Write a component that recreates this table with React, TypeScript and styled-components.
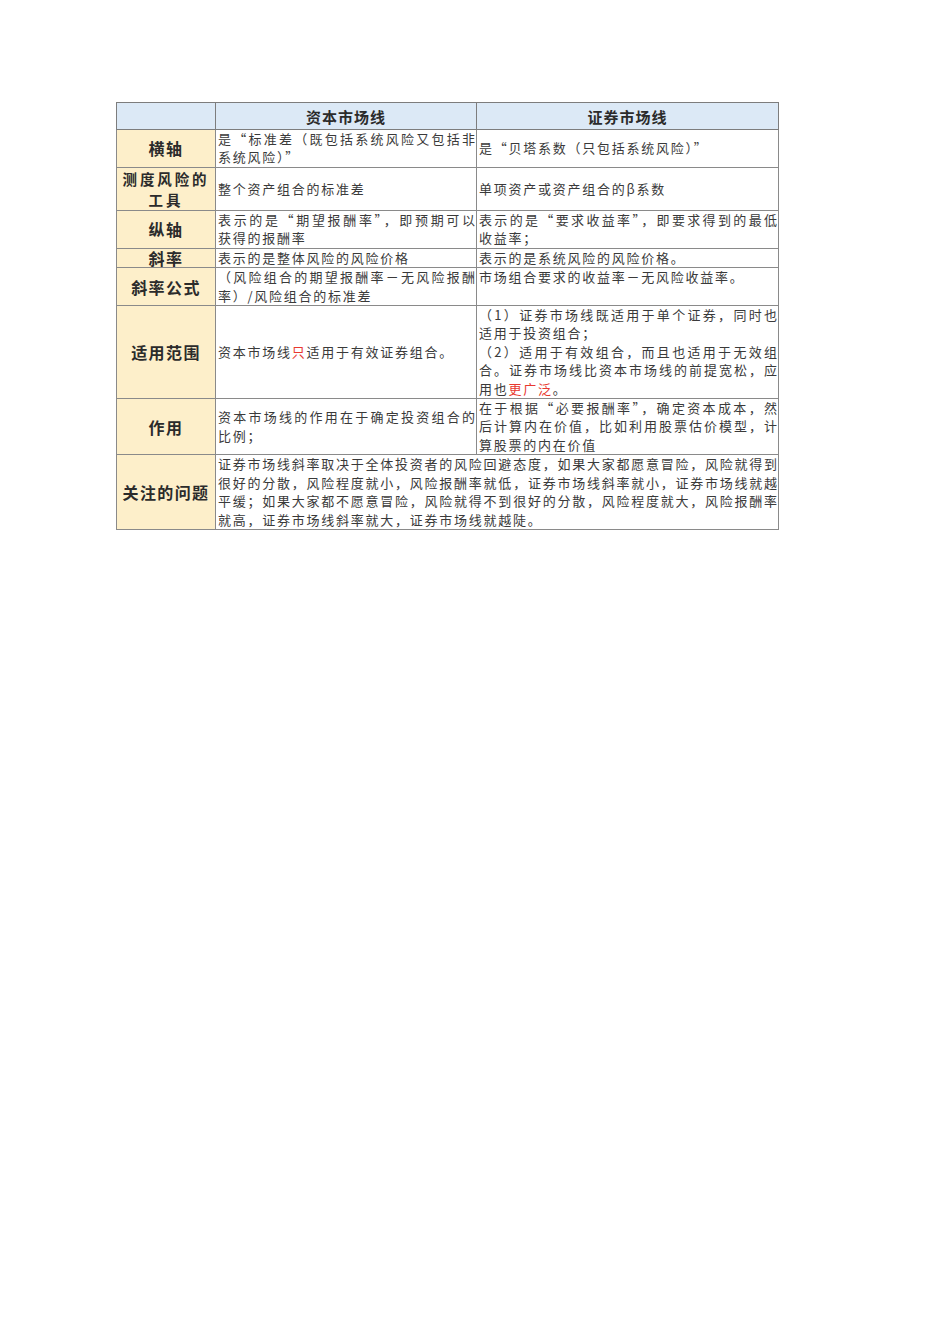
import React from "react";
import styled, { createGlobalStyle } from "styled-components";

const Global = createGlobalStyle`
  html, body { margin: 0; padding: 0; background: #ffffff; }
  body { font-family: "Noto Sans CJK SC", "Noto Sans", sans-serif; }
`;

const Page = styled.div`
  width: 950px;
  min-height: 1344px;
  box-sizing: border-box;
  padding: 102px 0 0 116px;
  background: #fff;
`;

const Table = styled.table`
  border-collapse: collapse;
  table-layout: fixed;
  width: 663px;
  border: 1px solid #7d7d7d;
  color: #333;
`;

const HeadCell = styled.th`
  height: 26px;
  padding: 0;
  background: #dce9f6;
  border: 1px solid #7d7d7d;
  font-size: 15px;
  font-weight: 700;
  letter-spacing: 1px;
  text-align: center;
  vertical-align: middle;
  color: #2b2b2b;
`;

const Row = styled.tr<{ $h: number }>`
  height: ${(p) => p.$h}px;
`;

const Label = styled.td<{ $two?: boolean }>`
  padding: 0;
  background: #fdefca;
  border: 1px solid #8a8a8a;
  font-size: ${(p) => (p.$two ? 14.5 : 16)}px;
  font-weight: 700;
  line-height: ${(p) => (p.$two ? 21 : 18)}px;
  letter-spacing: ${(p) => (p.$two ? 2.9 : 1.4)}px;
  text-align: center;
  vertical-align: middle;
  color: #2b2b2b;
`;

const Cell = styled.td<{ $top?: boolean }>`
  padding: 0 1px 0 2px;
  background: #fff;
  border: 1px solid #8a8a8a;
  font-size: 13px;
  line-height: 18.4px;
  letter-spacing: 1.75px;
  vertical-align: ${(p) => (p.$top ? "top" : "middle")};
  color: #3a3a3a;
`;

const Line = styled.div<{ $full?: boolean }>`
  white-space: nowrap;
  text-align: ${(p) => (p.$full ? "justify" : "left")};
  text-align-last: ${(p) => (p.$full ? "justify" : "left")};
  letter-spacing: ${(p) => (p.$full ? "0" : "inherit")};
`;

const Red = styled.span`
  color: #e8392f;
`;

type L = React.ReactNode;

const Lines: React.FC<{ lines: L[] }> = ({ lines }) => (
  <>
    {lines.map((l, i) => (
      <Line key={i} $full={i < lines.length - 1}>
        {l}
      </Line>
    ))}
  </>
);

export default function App() {
  return (
    <>
      <Global />
      <Page>
        <Table>
          <colgroup>
            <col style={{ width: 99 }} />
            <col style={{ width: 261 }} />
            <col style={{ width: 302 }} />
          </colgroup>
          <thead>
            <tr>
              <HeadCell></HeadCell>
              <HeadCell>资本市场线</HeadCell>
              <HeadCell>证券市场线</HeadCell>
            </tr>
          </thead>
          <tbody>
            <Row $h={37}>
              <Label>横轴</Label>
              <Cell>
                <Lines lines={["是“标准差（既包括系统风险又包括非", "系统风险）”"]} />
              </Cell>
              <Cell>
                <Lines lines={["是“贝塔系数（只包括系统风险）”"]} />
              </Cell>
            </Row>
            <Row $h={43}>
              <Label $two>
                测度风险的
                <br />
                工具
              </Label>
              <Cell>
                <Lines lines={["整个资产组合的标准差"]} />
              </Cell>
              <Cell>
                <Lines lines={["单项资产或资产组合的β系数"]} />
              </Cell>
            </Row>
            <Row $h={38}>
              <Label>纵轴</Label>
              <Cell>
                <Lines lines={["表示的是“期望报酬率”，即预期可以", "获得的报酬率"]} />
              </Cell>
              <Cell>
                <Lines lines={["表示的是“要求收益率”，即要求得到的最低", "收益率；"]} />
              </Cell>
            </Row>
            <Row $h={19}>
              <Label>斜率</Label>
              <Cell>
                <Lines lines={["表示的是整体风险的风险价格"]} />
              </Cell>
              <Cell>
                <Lines lines={["表示的是系统风险的风险价格。"]} />
              </Cell>
            </Row>
            <Row $h={37}>
              <Label>斜率公式</Label>
              <Cell>
                <Lines lines={["（风险组合的期望报酬率－无风险报酬", "率）/风险组合的标准差"]} />
              </Cell>
              <Cell $top>
                <Lines lines={["市场组合要求的收益率－无风险收益率。"]} />
              </Cell>
            </Row>
            <Row $h={93}>
              <Label>适用范围</Label>
              <Cell>
                <Lines
                  lines={[
                    <>
                      资本市场线<Red>只</Red>适用于有效证券组合。
                    </>,
                  ]}
                />
              </Cell>
              <Cell>
                <Line $full>（1）证券市场线既适用于单个证券，同时也</Line>
                <Line>适用于投资组合；</Line>
                <Line $full>（2）适用于有效组合，而且也适用于无效组</Line>
                <Line $full>合。证券市场线比资本市场线的前提宽松，应</Line>
                <Line>
                  用也<Red>更广泛</Red>。
                </Line>
              </Cell>
            </Row>
            <Row $h={56}>
              <Label>作用</Label>
              <Cell>
                <Lines lines={["资本市场线的作用在于确定投资组合的", "比例；"]} />
              </Cell>
              <Cell>
                <Lines
                  lines={[
                    "在于根据“必要报酬率”，确定资本成本，然",
                    "后计算内在价值，比如利用股票估价模型，计",
                    "算股票的内在价值",
                  ]}
                />
              </Cell>
            </Row>
            <Row $h={75}>
              <Label>关注的问题</Label>
              <Cell colSpan={2}>
                <Lines
                  lines={[
                    "证券市场线斜率取决于全体投资者的风险回避态度，如果大家都愿意冒险，风险就得到",
                    "很好的分散，风险程度就小，风险报酬率就低，证券市场线斜率就小，证券市场线就越",
                    "平缓；如果大家都不愿意冒险，风险就得不到很好的分散，风险程度就大，风险报酬率",
                    "就高，证券市场线斜率就大，证券市场线就越陡。",
                  ]}
                />
              </Cell>
            </Row>
          </tbody>
        </Table>
      </Page>
    </>
  );
}
